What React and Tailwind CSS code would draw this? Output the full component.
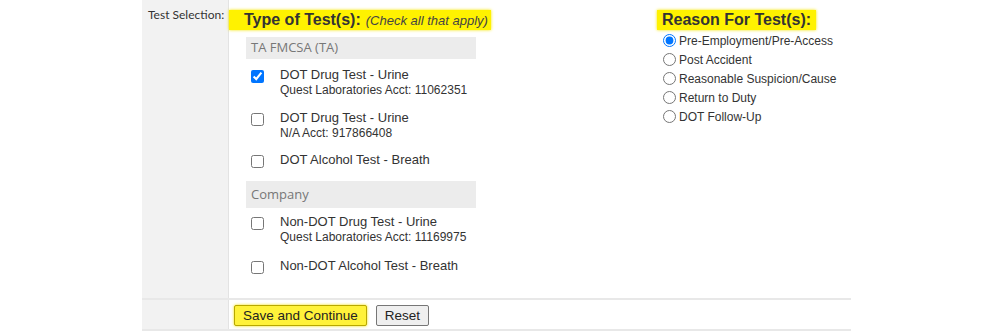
// App.jsx

function CheckItem({ checked, title, sub, className = '' }) {
  return (
    <div className={`flex items-start pl-[5px] ${className}`}>
      <input
        type="checkbox"
        defaultChecked={checked}
        className="w-[13px] h-[13px] m-0 mt-[3px] shrink-0 accent-[#0075ff]"
      />
      <div className="ml-[16px]">
        <div className="text-[13px] text-[#333] leading-[16px]">{title}</div>
        {sub && <div className="text-[12px] text-[#333] leading-[14px]">{sub}</div>}
      </div>
    </div>
  );
}

function GroupHeader({ label, h }) {
  return (
    <div
      className={`bg-[#ececec] w-[230px] flex items-center pl-[5px] text-[13px] text-[#777] ${h}`}
      style={{ fontFamily: '"Open Sans", "Noto Sans", sans-serif' }}
    >
      {label}
    </div>
  );
}

export default function App() {
  const reasons = [
    'Pre-Employment/Pre-Access',
    'Post Accident',
    'Reasonable Suspicion/Cause',
    'Return to Duty',
    'DOT Follow-Up',
  ];

  return (
    <div
      className="w-[994px] h-[333px] bg-white overflow-hidden"
      style={{ fontFamily: '"Liberation Sans", Arial, sans-serif' }}
    >
      <div className="ml-[142px] w-[709px]">
        {/* Test selection row */}
        <div className="flex h-[298px]">
          <div
            className="w-[87px] shrink-0 bg-[#f2f2f2] border-r border-[#e3e3e3] pl-[6px] pt-[8px] text-[12px] leading-[14px] text-[#333] whitespace-nowrap"
            style={{ fontFamily: 'Lato, "Noto Sans", sans-serif' }}
          >
            Test Selection:
          </div>
          <div className="flex-1 flex pt-[10px]">
            {/* Type of tests */}
            <div className="w-[428px]">
              <div className="flex w-fit items-baseline bg-[#fff200] h-[20px] pl-[15px] pr-[3px] shadow-[0_0_3px_#f5e600]">
                <span className="text-[16px] font-bold text-[#333] leading-[20px]">Type of Test(s):</span>
                <span className="ml-[5px] text-[13px] italic text-[#444]">(Check all that apply)</span>
              </div>
              <div className="ml-[17px] mt-[7px]">
                <GroupHeader label="TA FMCSA (TA)" h="h-[22px]" />
                <CheckItem className="mt-[8px] h-[43px]" checked title="DOT Drug Test - Urine" sub="Quest Laboratories Acct: 11062351" />
                <CheckItem className="h-[42px]" title="DOT Drug Test - Urine" sub="N/A Acct: 917866408" />
                <CheckItem className="h-[29px]" title="DOT Alcohol Test - Breath" />
                <GroupHeader label="Company" h="h-[27px]" />
                <CheckItem className="mt-[6px] h-[44px]" title="Non-DOT Drug Test - Urine" sub="Quest Laboratories Acct: 11169975" />
                <CheckItem title="Non-DOT Alcohol Test - Breath" />
              </div>
            </div>

            {/* Reason for tests */}
            <div>
              <div className="flex w-fit bg-[#fff200] h-[20px] px-[5px] shadow-[0_0_3px_#f5e600]">
                <span className="text-[16px] font-bold text-[#333] leading-[20px]">Reason For Test(s):</span>
              </div>
              <div className="mt-[1px] pl-[6px]">
                {reasons.map((r, i) => (
                  <label key={r} className="flex items-center h-[19px] text-[12px] text-[#333]">
                    <input
                      type="radio"
                      name="reason"
                      defaultChecked={i === 0}
                      className="w-[13px] h-[13px] m-0 accent-[#0075ff]"
                    />
                    <span className="ml-[3px]">{r}</span>
                  </label>
                ))}
              </div>
            </div>
          </div>
        </div>

        {/* Buttons row */}
        <div className="flex h-[33px] border-t-2 border-b-2 border-[#e8e8e8]">
          <div className="w-[87px] shrink-0 bg-[#f2f2f2] border-r border-[#e3e3e3]" />
          <div className="flex-1 flex items-center pl-[5px] pt-[2px] gap-[9px]">
            <button className="h-[21px] px-[8px] bg-[#fff23a] border border-[#b8a800] rounded-[2px] text-[13.5px] text-[#222] leading-none shadow-[0_0_3px_#f0e000]">
              Save and Continue
            </button>
            <button className="h-[21px] px-[8px] bg-[#efefef] border border-[#767676] rounded-[2px] text-[13.5px] text-[#222] leading-none">
              Reset
            </button>
          </div>
        </div>
      </div>
    </div>
  );
}
